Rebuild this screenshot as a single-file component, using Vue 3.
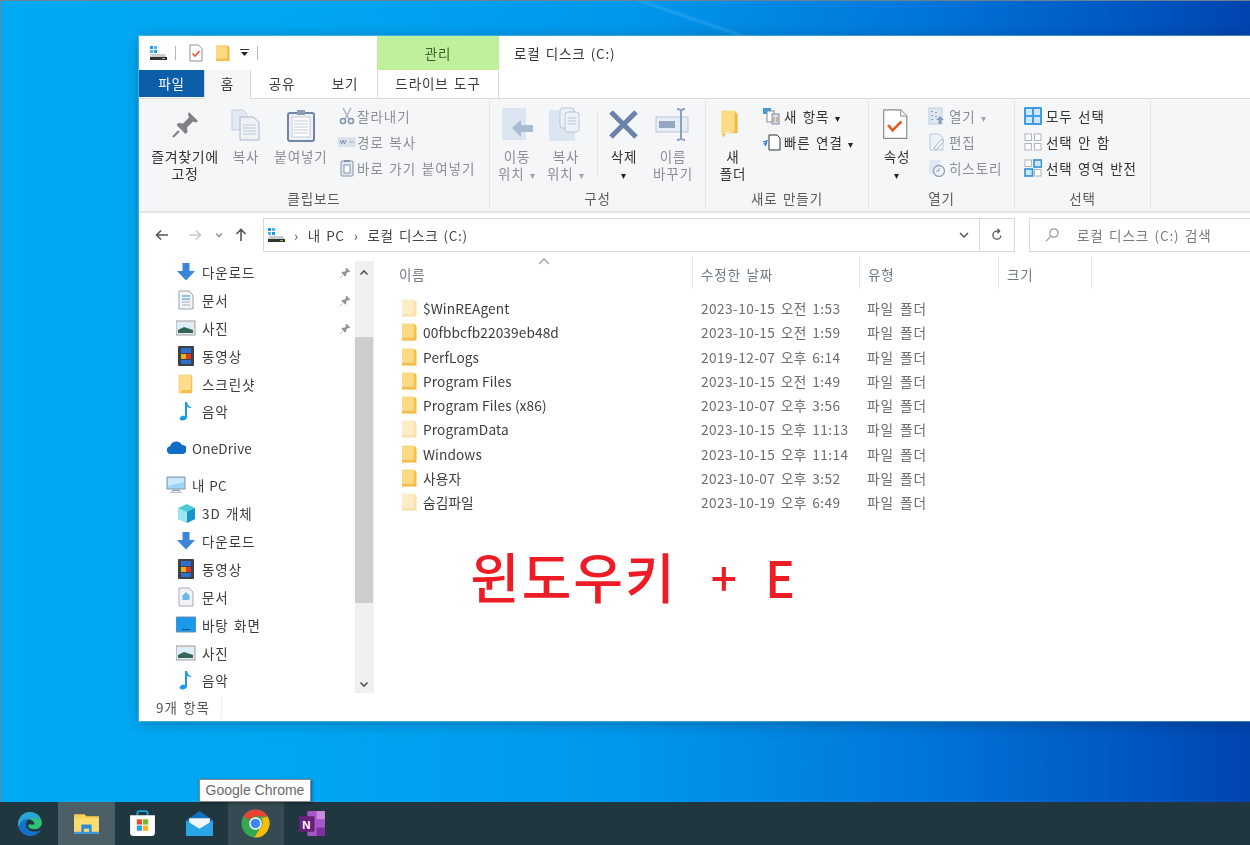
<template>
  <div class="desktop">
    <!-- explorer window -->
    <section class="win">
      <header class="titlebar">
        <div class="qat">
          <svg class="qi qdrive" viewBox="0 0 18 16" v-html="icons.drive" />
          <i class="qsep" />
          <svg class="qi qprops" viewBox="0 0 16 18" v-html="icons.props" />
          <svg class="qi qfold" viewBox="0 0 16 18" v-html="icons.folder" />
          <svg class="qdrop" viewBox="0 0 9 8"><path d="M0 .5h9" stroke="#333" /><path d="M1 3h7L4.500 7z" fill="#222" /></svg>
          <i class="qsep qsep2" />
        </div>
        <div class="manage">관리</div>
        <div class="wintitle">로컬 디스크 (C:)</div>
      </header>

      <nav class="tabs">
        <div class="tab tab-file">파일</div>
        <div class="tab tab-home">홈</div>
        <div class="tab tab-share">공유</div>
        <div class="tab tab-view">보기</div>
        <div class="tab tab-drive">드라이브 도구</div>
      </nav>

      <div class="ribbon">
        <!-- 클립보드 -->
        <div class="group" style="width:351px">
          <div class="group-body">
            <div class="big strong pinbtn" style="width:86px">
              <svg viewBox="0 0 32 32" v-html="icons.pin" />
              <span>즐겨찾기에<br />고정</span>
            </div>
            <div class="big dim" style="width:36px">
              <svg viewBox="0 0 32 32" v-html="icons.copy" />
              <span>복사</span>
            </div>
            <div class="big dim" style="width:74px">
              <svg viewBox="0 0 32 32" v-html="icons.paste" />
              <span>붙여넣기</span>
            </div>
            <div class="smalls clip">
              <div class="small dim"><svg viewBox="0 0 18 18" v-html="icons.cut" /><span>잘라내기</span></div>
              <div class="small dim"><svg viewBox="0 0 18 18" v-html="icons.path" /><span>경로 복사</span></div>
              <div class="small dim"><svg viewBox="0 0 18 18" v-html="icons.shortcut" /><span>바로 가기 붙여넣기</span></div>
            </div>
          </div>
          <div class="group-label">클립보드</div>
        </div>

        <!-- 구성 -->
        <div class="group" style="width:216px">
          <div class="group-body organize">
            <div class="big dim" style="width:50px">
              <svg viewBox="0 0 36 36" v-html="icons.move" />
              <span>이동<br />위치 <em>▾</em></span>
            </div>
            <div class="big dim" style="width:48px">
              <svg viewBox="0 0 36 36" v-html="icons.copyto" />
              <span>복사<br />위치 <em>▾</em></span>
            </div>
            <i class="vsep" />
            <div class="big strong" style="width:52px">
              <svg viewBox="0 0 36 36" v-html="icons.del" />
              <span>삭제<br /><em class="dark">▾</em></span>
            </div>
            <div class="big dim" style="width:46px">
              <svg viewBox="0 0 36 36" v-html="icons.rename" />
              <span>이름<br />바꾸기</span>
            </div>
          </div>
          <div class="group-label">구성</div>
        </div>

        <!-- 새로 만들기 -->
        <div class="group" style="width:163px">
          <div class="group-body newgrp">
            <div class="big strong" style="width:54px">
              <svg viewBox="0 0 36 36" v-html="icons.newfolder" />
              <span>새<br />폴더</span>
            </div>
            <div class="smalls two">
              <div class="small strong"><svg viewBox="0 0 18 18" v-html="icons.newitem" /><span>새 항목 <em class="dark">▾</em></span></div>
              <div class="small strong"><svg viewBox="0 0 18 18" v-html="icons.easy" /><span>빠른 연결 <em class="dark">▾</em></span></div>
            </div>
          </div>
          <div class="group-label">새로 만들기</div>
        </div>

        <!-- 열기 -->
        <div class="group" style="width:146px">
          <div class="group-body opengrp">
            <div class="big strong" style="width:52px">
              <svg viewBox="0 0 36 36" v-html="icons.propsBig" />
              <span>속성<br /><em class="dark">▾</em></span>
            </div>
            <div class="smalls">
              <div class="small dim"><svg viewBox="0 0 18 18" v-html="icons.open" /><span>열기 <em>▾</em></span></div>
              <div class="small dim"><svg viewBox="0 0 18 18" v-html="icons.edit" /><span>편집</span></div>
              <div class="small dim"><svg viewBox="0 0 18 18" v-html="icons.history" /><span>히스토리</span></div>
            </div>
          </div>
          <div class="group-label">열기</div>
        </div>

        <!-- 선택 -->
        <div class="group" style="width:136px">
          <div class="group-body selgrp">
            <div class="smalls">
              <div class="small strong"><svg viewBox="0 0 18 18" v-html="icons.selAll" /><span>모두 선택</span></div>
              <div class="small strong"><svg viewBox="0 0 18 18" v-html="icons.selNone" /><span>선택 안 함</span></div>
              <div class="small strong"><svg viewBox="0 0 18 18" v-html="icons.selInv" /><span>선택 영역 반전</span></div>
            </div>
          </div>
          <div class="group-label">선택</div>
        </div>
      </div>

      <!-- address row -->
      <div class="addr-row">
        <div class="navs">
          <svg viewBox="0 0 16 16" class="nav on"><path d="M14 8H2.500M7 3.500 2.500 8 7 12.500" /></svg>
          <svg viewBox="0 0 16 16" class="nav off"><path d="M2 8h11.500M9 3.500 13.500 8 9 12.500" /></svg>
          <svg viewBox="0 0 10 10" class="nav chev"><path d="M2 3.500 5 6.500 8 3.500" /></svg>
          <svg viewBox="0 0 16 16" class="nav on"><path d="M8 14V2.500M3.500 7 8 2.500 12.500 7" /></svg>
        </div>
        <div class="addr">
          <svg class="drive" viewBox="0 0 18 16" v-html="icons.drive" />
          <span class="crumb-sep">›</span><span>내 PC</span>
          <span class="crumb-sep">›</span><span>로컬 디스크 (C:)</span>
          <span class="addr-end">
            <svg viewBox="0 0 12 12" class="addr-chev"><path d="M2 4l4 4 4-4" /></svg>
            <i class="addr-div" />
            <svg viewBox="0 0 16 16" class="refresh"><path d="M12.500 8.500A4.600 4.600 0 1 1 8 3.500h2M8.500 1 11 3.500 8.500 6" /></svg>
          </span>
        </div>
        <div class="search">
          <svg viewBox="0 0 16 16"><circle cx="10" cy="6" r="4.200" /><path d="M7 9.200 2 14.200" /></svg>
          <span>로컬 디스크 (C:) 검색</span>
        </div>
      </div>

      <div class="content">
        <aside class="side">
          <div class="tree">
            <div
              v-for="item in tree"
              :key="item.key"
              class="node"
              :class="{ root: item.root, gap: item.gap }"
            >
              <svg viewBox="0 0 20 20" v-html="icons[item.icon]" />
              <span>{{ item.label }}</span>
              <svg v-if="item.pin" class="pinned" viewBox="0 0 12 12" v-html="icons.tinyPin" />
            </div>
          </div>
          <div class="scrollbar">
            <svg class="sb-arrow" viewBox="0 0 10 10"><path d="M1.500 6.500 5 3l3.500 3.500" /></svg>
            <div class="sb-thumb" />
            <svg class="sb-arrow sb-down" viewBox="0 0 10 10"><path d="M1.500 3.500 5 7l3.500-3.500" /></svg>
          </div>
        </aside>

        <main class="files">
          <div class="cols">
            <svg class="sort" viewBox="0 0 12 7"><path d="M1 6l5-5 5 5" /></svg>
            <div class="col" style="width:294px">이름</div>
            <div class="col" style="width:159px">수정한 날짜</div>
            <div class="col" style="width:131px">유형</div>
            <div class="col" style="width:85px">크기</div>
          </div>
          <div class="rows">
            <div v-for="f in files" :key="f.name" class="row" :class="{ hidden: f.hidden }">
              <div class="fname">
                <svg viewBox="0 0 16 18" v-html="icons.folder" />
                <span>{{ f.name }}</span>
              </div>
              <div class="fdate">{{ f.date }}</div>
              <div class="ftype">파일 폴더</div>
            </div>
          </div>
          <div class="note">윈도우키<b>+</b><b class="e">E</b></div>
        </main>
      </div>

      <footer class="status"><span>9개 항목</span></footer>
    </section>

    <!-- tooltip over the taskbar -->
    <div class="tooltip">Google Chrome</div>

    <div class="taskbar">
      <div class="tb"><svg viewBox="0 0 28 28" v-html="icons.edge" /></div>
      <div class="tb active"><svg viewBox="0 0 28 28" v-html="icons.explorer" /></div>
      <div class="tb"><svg viewBox="0 0 28 28" v-html="icons.store" /></div>
      <div class="tb"><svg viewBox="0 0 28 28" v-html="icons.mail" /></div>
      <div class="tb hover"><svg viewBox="0 0 28 28" v-html="icons.chrome" /></div>
      <div class="tb"><svg viewBox="0 0 28 28" v-html="icons.onenote" /></div>
    </div>
  </div>
</template>

<script setup>
const folder20 = '<path d="M3 1h13v18H3z" fill="#fcdd8e" stroke="#f0c766" stroke-width=".6"/><path d="M15 3v13H5v3h11V3z" fill="#f3c04f"/>'

const icons = {
  drive: '<rect x="1" y="1" width="3" height="3" fill="#1e9be8"/><rect x="5" y="1" width="3" height="3" fill="#4fb6f0"/><rect x="1" y="5" width="3" height="3" fill="#4fb6f0"/><rect x="5" y="5" width="3" height="3" fill="#1e9be8"/><path d="M2 9h14l1.500 3H1z" fill="#c9ced2"/><rect x="1" y="12" width="17" height="3" fill="#333"/><rect x="13" y="13" width="3" height="1" fill="#6fd04a"/>',
  props: '<path d="M2 1h8.500L14 4.500V17H2z" fill="#fff" stroke="#8f8f8f"/><path d="M4.500 9.500l2.500 2.500 4.500-5" fill="none" stroke="#e8582a" stroke-width="1.600"/>',
  folder: '<path d="M1 1h11l2.500 2v14H1z" fill="#fcd983"/><path d="M12 1v13.500H1V17h13.500V3z" fill="#f3c04f"/>',
  pin: '<path d="M20 3l9 9-2 1.500-3-1-6 6 .5 4.500-2 2-9-9 2-2 4.500.5 6-6-1-3z" fill="#808285"/><path d="M10 22l-6 6" stroke="#808285" stroke-width="2.200"/>',
  copy: '<path d="M2 1h11l4 4v16H2z" fill="#e3e9f2" stroke="#c5d0df"/><path d="M10 8h13l6 5v18H10z" fill="#eef2f7" stroke="#a9b8cc"/><path d="M13 16h13M13 19h13M13 22h13M13 25h13" stroke="#bcc8d8"/>',
  paste: '<rect x="3" y="4" width="26" height="28" rx="2" fill="#eef1f5" stroke="#6f86a8" stroke-width="2"/><rect x="7" y="8" width="18" height="20" fill="#fff" stroke="#c5cdd8"/><path d="M9 12h14M9 15h14M9 18h14M9 21h14M9 24h14" stroke="#c3ccd8"/><rect x="12" y="1" width="8" height="5" fill="#8c9db5"/>',
  cut: '<path d="M5 1l6 11M13 1 7 12" stroke="#a9b3bf" stroke-width="1.500" fill="none"/><circle cx="5" cy="14" r="2.500" fill="none" stroke="#7e93b2" stroke-width="1.500"/><circle cx="13" cy="14" r="2.500" fill="none" stroke="#7e93b2" stroke-width="1.500"/>',
  path: '<rect x="0" y="4" width="18" height="10" fill="#dbe3ef"/><path d="M2 7l1.500 4L5 7l1.500 4L8 7" stroke="#7e93b2" fill="none"/><path d="M11 9h5" stroke="#9fb0c7"/>',
  shortcut: '<rect x="3" y="2" width="12" height="15" rx="1" fill="#e3e8ef" stroke="#8496b0"/><rect x="6" y="6" width="6" height="8" fill="#fff" stroke="#7e93b2"/><rect x="6" y="1" width="6" height="2" fill="#8496b0"/>',
  move: '<rect x="3" y="1" width="24" height="32" fill="#dce6f2"/><path d="M13 21l9-8v5h12v7H22v5z" fill="#a9bcd3"/>',
  copyto: '<rect x="1" y="3" width="26" height="31" fill="#dce6f2"/><rect x="12" y="1" width="14" height="20" rx="3" fill="#eef2f7" stroke="#b7c5d8"/><rect x="17" y="5" width="14" height="20" rx="3" fill="#eef2f7" stroke="#b7c5d8"/><path d="M20 11h8M20 14h8M20 17h8" stroke="#b7c5d8"/>',
  del: '<path d="M5 5l25 25M30 5 5 30" stroke="#6a83a8" stroke-width="5"/>',
  rename: '<rect x="1" y="10" width="32" height="15" fill="#e8eef6" stroke="#b6c4d8"/><rect x="4" y="14" width="16" height="7" fill="#93a6c2"/><path d="M26 3v29M22 2c2 0 4 1 4 2 0-1 2-2 4-2M22 33c2 0 4-1 4-2 0 1 2 2 4 2" stroke="#8ba0bd" stroke-width="2" fill="none"/>',
  newfolder: '<path d="M5 2h15l3 3v21H5z" fill="#f9d672"/><path d="M20 2v24H10l-3 6-2-3V2z" fill="#fbdc85"/><path d="M20 4l3 2v21l-13 .5L7 32V28l13-2z" fill="#eeb93f"/>',
  newitem: '<rect x="0" y="1" width="8" height="6" fill="#3f9be0"/><rect x="4" y="4" width="7" height="11" fill="#fff" stroke="#888"/><rect x="9" y="7" width="7" height="10" fill="#d8dff0" stroke="#889"/><path d="M11 10v5M14 10v5" stroke="#b85" />',
  easy: '<path d="M6 2h8l3 3v12H6z" fill="#fff" stroke="#333"/><path d="M0 9l4-1-1 2-2 1h2l-1 2" fill="none" stroke="#1e73c8" stroke-width="1.200"/>',
  propsBig: '<path d="M3 1h19l7 7v25H3z" fill="#fff" stroke="#8a8a8a" stroke-width="1.300"/><path d="M22 1v7h7" fill="#eee" stroke="#8a8a8a"/><path d="M8 18l5 6 10-10" fill="none" stroke="#ea5a1e" stroke-width="3"/>',
  open: '<rect x="1" y="1" width="13" height="16" fill="#dfe7f2" stroke="#c1cedd"/><path d="M4 4v1M4 8v1M4 12v1M8 5v1M8 9v1" stroke="#6e86a8" stroke-width="1.500"/><path d="M12 9l4 4h-2.500v4h-3v-4H8z" fill="#8ba0bd"/>',
  edit: '<path d="M2 1h9l4 4v12H2z" fill="#edf2f8" stroke="#bccadb"/><path d="M6 15l8-9 2 2-8 9z" fill="#fff" stroke="#9db1ca"/>',
  history: '<rect x="1" y="1" width="11" height="14" fill="#dfe7f2"/><circle cx="11" cy="12" r="5.500" fill="#eef2f7" stroke="#8c9fb8" stroke-width="1.300"/><path d="M11 9v3H8" stroke="#8c9fb8" fill="none"/>',
  selAll: '<rect x="0" y="0" width="18" height="18" rx="1" fill="#3f9ce6"/><rect x="2" y="2" width="6" height="6" fill="#cfe7fa"/><rect x="10" y="2" width="6" height="6" fill="#cfe7fa"/><rect x="2" y="10" width="6" height="6" fill="#cfe7fa"/><rect x="10" y="10" width="6" height="6" fill="#cfe7fa"/>',
  selNone: '<g fill="#fff" stroke="#aeb4ba"><rect x="1" y="1" width="6.500" height="6.500"/><rect x="10.500" y="1" width="6.500" height="6.500"/><rect x="1" y="10.500" width="6.500" height="6.500"/><rect x="10.500" y="10.500" width="6.500" height="6.500"/></g>',
  selInv: '<g fill="#fff" stroke="#aeb4ba"><rect x="1" y="1" width="6.500" height="6.500"/><rect x="10.500" y="10.500" width="6.500" height="6.500"/></g><g fill="#cfe7fa" stroke="#2f8fe0" stroke-width="1.600"><rect x="10" y="1" width="7.500" height="7"/><rect x="1" y="10" width="7.500" height="7"/></g>',
  tinyPin: '<path d="M7.500 1 11 4.500l-1 .5-1.200-.3-2 2 .2 1.800-.8.800-3.500-3.500.8-.8 1.800.2 2-2L7 1.500zM3.500 8.500 1 11" fill="#8a9096" stroke="#8a9096" stroke-width=".6"/>',
  down: '<path d="M6.500 1h7v8h5.500L10 18.500 1 9h5.500z" fill="#3a85d8"/>',
  docs: '<path d="M3 1h10l4 4v14H3z" fill="#f2f4f6" stroke="#9aa3ab"/><path d="M6 6h8M6 9h8" stroke="#6fb0e8" stroke-width="1.500"/><path d="M6 12h8M6 15h8" stroke="#a8b0b8"/>',
  pics: '<rect x="0" y="3" width="19" height="14" fill="#e6e8ea" stroke="#9aa0a6"/><rect x="2" y="5" width="15" height="10" fill="#dbeefa"/><path d="M2 12l6-3 9 3v3H2z" fill="#33665a"/>',
  videos: '<rect x="2" y="0" width="16" height="20" rx="1" fill="#3d4348"/><rect x="5" y="2" width="10" height="5" fill="#2f6fd0"/><rect x="5" y="8" width="5" height="5" fill="#e8b21c"/><rect x="10" y="8" width="5" height="5" fill="#d83a26"/><rect x="5" y="14" width="10" height="4" fill="#2f6fd0"/>',
  shots: folder20,
  music: '<path d="M9 1h2c.5 3 2 4 5 6-2 0-4-.5-5-1.500V16c0 2-2 3.500-4.500 3.500S3 18 4 16.500 7 14.500 9 15z" fill="#1a9be8"/>',
  cloud: '<path d="M4 17a4 4 0 0 1 0-7.800A6.500 6.500 0 0 1 16 8a4.500 4.500 0 0 1 1 9z" fill="#0f6fc6" transform="translate(0,-1)"/>',
  pc: '<rect x="1" y="2" width="18" height="12" fill="#9fd4f5" stroke="#8a9aa6"/><path d="M2 3h16v4L2 11z" fill="#c8e8fb"/><rect x="6" y="14.500" width="8" height="1.500" fill="#9aa4ab"/><rect x="4" y="16.500" width="12" height="1.500" fill="#c0c6cb"/>',
  cube: '<path d="M2 5l9-4 8 4v11l-8 4-9-4z" fill="#4fcbd8"/><path d="M11 9l8-4v11l-8 4z" fill="#1595c9"/><path d="M2 5l9 4v11l-9-4z" fill="#9be6ee"/>',
  docs2: '<path d="M3 1h10l4 4v14H3z" fill="#f0f2f4" stroke="#a4adb5"/><path d="M10 5l3.500 3.500V13H6.500V8.500z" fill="#6fb6ea"/>',
  desk: '<rect x="0" y="2" width="20" height="15" rx="1" fill="#1a98ea" stroke="#6c8ea8"/><rect x="6" y="14" width="8" height="1" fill="#0b4f80"/>',
  edge: '<path d="M25 14c0-6-5-11-11.500-11C7 3 2 8.500 2 14.500c0 1 .2 2 .5 3C4 12 8 9.500 12 10c4 .5 6 3 6 5h-6c-1 4 3 4.500 7 4.500 2 0 5-1.500 6-5.500z" fill="#32c17a"/><path d="M2.500 17.500C4 23 9 26 14 26c4.500 0 8-2.500 10-5.500-3 1.500-9 2-12-.5-3-2.500-3-6 0-10C8 9.500 4 12 2.500 17.500z" fill="#1371c7"/><path d="M13.500 3C7 3 2 8.500 2 14.500c0 1 .2 2 .5 3C4 12 8 9.500 12 10c3-1 8-2 12 1C22 6 18 3 13.500 3z" fill="#2aa3d6"/>',
  explorer: '<path d="M2 5h10l2 2h12v17H2z" fill="#f7cf52"/><rect x="2" y="9" width="24" height="15" fill="#fbdc6e"/><rect x="9" y="15" width="10" height="9" fill="#2f8bd8"/><rect x="11.500" y="19" width="5" height="5" fill="#f7dd7e"/><rect x="2" y="22" width="24" height="2" fill="#3397e0"/>',
  store: '<path d="M9 6V4a2 2 0 0 1 2-2h6a2 2 0 0 1 2 2v2" fill="none" stroke="#19a0e0" stroke-width="1.800"/><path d="M2 6h24v17a3 3 0 0 1-3 3H5a3 3 0 0 1-3-3z" fill="#fdfdfd"/><rect x="8.500" y="10" width="5" height="5" fill="#ea4a2c"/><rect x="14.500" y="10" width="5" height="5" fill="#70b82a"/><rect x="8.500" y="16" width="5" height="5" fill="#1f9fe8"/><rect x="14.500" y="16" width="5" height="5" fill="#f5b60e"/>',
  mail: '<path d="M1 11 14 2l13 9v14H1z" fill="#0f72c4"/><path d="M4 9h20v5l-10 6-10-6z" fill="#f2f6fa"/><path d="M1 11l13 8 13-8v15H1z" fill="#2aa6e6"/>',
  chrome: '<circle cx="14" cy="14" r="13.500" fill="#34a853"/><path d="M14 .5a13.500 13.500 0 0 1 11.700 6.800H14a6.500 6.500 0 0 0-5.800 3.600L2.500 7A13.500 13.500 0 0 1 14 .5z" fill="#ea4335"/><path d="M25.700 7.300A13.500 13.500 0 0 1 13 27.500l5.700-9.500A6.500 6.500 0 0 0 19.700 9z" fill="#fbbc05"/><circle cx="14" cy="14" r="6" fill="#fff"/><circle cx="14" cy="14" r="4.700" fill="#4285f4"/>',
  onenote: '<rect x="9" y="2" width="17" height="24" rx="1" fill="#a557c8"/><rect x="18" y="2" width="8" height="8" fill="#c98ae0"/><rect x="18" y="10" width="8" height="8" fill="#a557c8"/><rect x="18" y="18" width="8" height="8" fill="#7e2f9f"/><rect x="1" y="7" width="15" height="15" rx="1" fill="#68217a"/><text x="4" y="19" font-size="11" font-weight="700" fill="#fff" font-family="Liberation Sans">N</text>'
}

const tree = [
  { key: 'a1', icon: 'down', label: '다운로드', pin: true },
  { key: 'a2', icon: 'docs', label: '문서', pin: true },
  { key: 'a3', icon: 'pics', label: '사진', pin: true },
  { key: 'a4', icon: 'videos', label: '동영상' },
  { key: 'a5', icon: 'shots', label: '스크린샷' },
  { key: 'a6', icon: 'music', label: '음악' },
  { key: 'od', icon: 'cloud', label: 'OneDrive', root: true, gap: true },
  { key: 'pc', icon: 'pc', label: '내 PC', root: true, gap: true },
  { key: 'b1', icon: 'cube', label: '3D 개체' },
  { key: 'b2', icon: 'down', label: '다운로드' },
  { key: 'b3', icon: 'videos', label: '동영상' },
  { key: 'b4', icon: 'docs2', label: '문서' },
  { key: 'b5', icon: 'desk', label: '바탕 화면' },
  { key: 'b6', icon: 'pics', label: '사진' },
  { key: 'b7', icon: 'music', label: '음악' }
]

const files = [
  { name: '$WinREAgent', date: '2023-10-15 오전 1:53', hidden: true },
  { name: '00fbbcfb22039eb48d', date: '2023-10-15 오전 1:59' },
  { name: 'PerfLogs', date: '2019-12-07 오후 6:14' },
  { name: 'Program Files', date: '2023-10-15 오전 1:49' },
  { name: 'Program Files (x86)', date: '2023-10-07 오후 3:56' },
  { name: 'ProgramData', date: '2023-10-15 오후 11:13', hidden: true },
  { name: 'Windows', date: '2023-10-15 오후 11:14' },
  { name: '사용자', date: '2023-10-07 오후 3:52' },
  { name: '숨김파일', date: '2023-10-19 오후 6:49', hidden: true }
]
</script>

<style>
html, body { margin: 0; background: #0aa0ea; }
</style>

<style scoped>
.desktop {
  position: relative;
  width: 1250px;
  height: 845px;
  overflow: hidden;
  font-family: "Noto Sans CJK KR", "Noto Sans", "Liberation Sans", sans-serif;
  font-size: 13.500px;
  letter-spacing: .9px;
  word-spacing: 1.500px;
  color: #3a3a3a;
  background:
    linear-gradient(18.900deg, transparent 83.300%, rgba(255,255,255,.12) 83.500%, transparent 83.800%),
    linear-gradient(90deg, #00aaf5 0%, #00a6f2 25%, #0098ec 50%, #0079dc 72%, #0058c4 90%, #0044ae 100%);
  box-shadow: inset 0 1px 0 #6d8290, inset 1px 0 0 #6d8290;
}

/* ── Window (free on the desktop) ─────────────────────────── */
.win {
  position: absolute;
  left: 139px;
  top: 36px;
  width: 1111px;
  height: 685px;
  background: #fff;
  display: flex;
  flex-direction: column;
  box-shadow: 0 0 0 1px rgba(120,200,240,.5), 0 2px 14px rgba(0,0,0,.28);
  filter: blur(.4px);
}

.titlebar {
  height: 34px;
  display: flex;
  flex-shrink: 0;
}
.qat {
  width: 238px;
  display: flex;
  align-items: center;
  padding-left: 10px;
  box-sizing: border-box;
}
.qi { flex-shrink: 0; }
.qdrive { width: 18px; height: 16px; margin-right: 8px; }
.qprops { width: 16px; height: 18px; margin-left: 12px; }
.qfold { width: 16px; height: 18px; margin-left: 11px; }
.qsep { width: 1px; height: 14px; background: #b5b5b5; }
.qsep2 { margin-left: 8px; }
.qdrop { width: 9px; height: 8px; margin-left: 9px; }
.manage {
  width: 122px;
  background: #bff09c;
  text-align: center;
  line-height: 34px;
  color: #3f5f30;
}
.wintitle {
  margin-left: 15px;
  line-height: 34px;
  color: #333;
  letter-spacing: .8px;
}

.tabs {
  height: 29px;
  display: flex;
  flex-shrink: 0;
  box-sizing: border-box;
  border-bottom: 1px solid #dadbdc;
}
.tab { line-height: 27px; text-align: center; }
.tab-file { width: 65px; height: 27px; background: #0c5ea9; color: #fff; }
.tab-home {
  width: 47px;
  height: 29px;
  background: #f5f6f7;
  border: 1px solid #dadbdc;
  border-bottom: 0;
  border-top: 0;
  box-sizing: border-box;
}
.tab-share { width: 62px; }
.tab-view { width: 64px; }
.tab-drive {
  width: 122px;
  border-left: 1px solid #dadbdc;
  border-right: 1px solid #dadbdc;
  box-sizing: border-box;
}

.ribbon {
  height: 114px;
  flex-shrink: 0;
  display: flex;
  box-sizing: border-box;
  background: #f5f6f7;
  border-bottom: 2px solid #e4e5e6;
}
.group {
  box-sizing: border-box;
  display: flex;
  flex-direction: column;
  border-right: 1px solid #e2e3e4;
  height: 107px;
  margin-top: 2px;
}
.group-body {
  flex: 1;
  display: flex;
  padding: 6px 0 0 3px;
  min-height: 0;
}
.group-label {
  height: 19px;
  line-height: 19px;
  text-align: center;
  color: #5a5a5a;
}
.big {
  display: flex;
  flex-direction: column;
  align-items: center;
  text-align: center;
  line-height: 17px;
  flex-shrink: 0;
}
.big svg { width: 32px; height: 36px; margin-bottom: 5px; }
.pinbtn { font-size: 14px; letter-spacing: .6px; }
.strong { color: #333; }
.dim { color: #8b8f93; }
em { font-style: normal; font-size: 10px; color: #a0a4a8; }
em.dark { color: #222; }

.smalls {
  display: flex;
  flex-direction: column;
  gap: 5px;
  margin-top: -2px;
}
.clip .small { gap: 1px; letter-spacing: 1px; }
.small {
  height: 21px;
  display: flex;
  align-items: center;
  gap: 3px;
  white-space: nowrap;
}
.small svg { width: 18px; height: 18px; flex-shrink: 0; }
.organize { padding-left: 2px; }
.organize .big svg { width: 36px; }
.vsep { width: 1px; height: 64px; margin: 4px 0 0 7px; background: #e2e3e4; }
.newgrp { padding-left: 0; }
.newgrp .smalls { margin-left: 3px; }
.opengrp { padding-left: 2px; }
.opengrp .smalls { margin-left: 5px; }
.selgrp { padding-left: 9px; }
.selgrp .small { gap: 4px; }

/* ── Address row ──────────────────────────────────────────── */
.addr-row {
  height: 44px;
  flex-shrink: 0;
  display: flex;
  align-items: center;
  box-sizing: border-box;
}
.navs {
  width: 124px;
  display: flex;
  align-items: center;
  padding-left: 15px;
  gap: 17px;
  box-sizing: border-box;
}
.nav { width: 16px; height: 16px; fill: none; stroke-width: 1.600; flex-shrink: 0; }
.nav.on { stroke: #555; }
.nav.off { stroke: #c8c8c8; }
.nav.chev { width: 10px; height: 10px; stroke: #9a9a9a; margin: 0 -8px 0 -6px; }
.addr {
  width: 752px;
  height: 34px;
  box-sizing: border-box;
  border: 1px solid #d9d9d9;
  display: flex;
  align-items: center;
  padding-left: 3px;
  gap: 7px;
  color: #444;
  letter-spacing: .7px;
}
.drive { width: 18px; height: 16px; flex-shrink: 0; }
.crumb-sep { color: #555; margin: 0 2px 0 2px; }
.addr-end {
  margin-left: auto;
  display: flex;
  align-items: center;
  height: 100%;
}
.addr-chev { width: 12px; height: 12px; fill: none; stroke: #555; stroke-width: 1.500; margin-right: 9px; }
.addr-div { width: 1px; height: 100%; background: #d9d9d9; }
.refresh { width: 14px; height: 14px; margin: 0 10px; fill: none; stroke: #555; stroke-width: 1.500; }
.search {
  margin-left: 14px;
  flex: 1;
  height: 34px;
  box-sizing: border-box;
  border: 1px solid #d9d9d9;
  border-right: 0;
  display: flex;
  align-items: center;
  padding-left: 14px;
  gap: 17px;
  color: #7a7a7a;
}
.search svg { width: 16px; height: 16px; fill: none; stroke: #999; stroke-width: 1.200; flex-shrink: 0; }

/* ── Content ──────────────────────────────────────────────── */
.content {
  flex: 1;
  display: flex;
  min-height: 0;
}
.side {
  width: 235px;
  flex-shrink: 0;
  display: flex;
  box-sizing: border-box;
  border-right: 1px solid #f0f0f0;
}
.tree {
  width: 217px;
  padding-top: 1px;
  box-sizing: border-box;
}
.node {
  height: 27.900px;
  display: flex;
  align-items: center;
  padding-left: 37px;
  gap: 6px;
  color: #3c3c3c;
  position: relative;
}
.node > svg:first-child { width: 20px; height: 20px; flex-shrink: 0; }
.node.root { padding-left: 27px; letter-spacing: .2px; }
.node.gap { margin-top: 9px; }
.pinned { position: absolute; right: 4px; top: 9px; width: 12px; height: 12px; }
.scrollbar {
  width: 18px;
  margin: 4px 0 2px;
  background: #f0f0f0;
  display: flex;
  flex-direction: column;
  align-items: center;
}
.sb-arrow {
  width: 10px;
  height: 10px;
  fill: none;
  stroke: #555;
  stroke-width: 1.600;
  margin: 7px 0 59px;
  flex-shrink: 0;
}
.sb-thumb { width: 100%; height: 266px; background: #cdcdcd; }
.sb-down { margin: auto 0 4px; }

.files {
  flex: 1;
  position: relative;
  padding-left: 25px;
  min-width: 0;
}
.cols {
  height: 32px;
  display: flex;
  position: relative;
}
.sort {
  position: absolute;
  left: 139px;
  top: 1px;
  width: 12px;
  height: 7px;
  fill: none;
  stroke: #a0a0a0;
  stroke-width: 1.300;
}
.col {
  box-sizing: border-box;
  color: #6f7a85;
  line-height: 34px;
  border-right: 1px solid #e5e5e5;
  margin-right: 8px;
  height: 32px;
  flex-shrink: 0;
}
.rows { padding-top: 7px; }
.row {
  height: 24.250px;
  display: flex;
  align-items: center;
  color: #3c3c3c;
}
.fname {
  width: 302px;
  display: flex;
  align-items: center;
  gap: 5px;
  padding-left: 2px;
  box-sizing: border-box;
  font-size: 13.700px;
  letter-spacing: .1px;
  word-spacing: 0;
}
.fname svg { width: 17px; height: 20px; flex-shrink: 0; }
.fdate { width: 166px; color: #6d6d6d; font-size: 13.700px; letter-spacing: .4px; word-spacing: 2px; }
.ftype { color: #6d6d6d; font-size: 13.700px; letter-spacing: .9px; word-spacing: 2px; }
.hidden .fname svg { opacity: .45; }

.note {
  position: absolute;
  left: 96px;
  top: 284px;
  color: #ee1c25;
  font-size: 54px;
  letter-spacing: 2px;
  word-spacing: 0;
  line-height: 70px;
  font-weight: 500;
  white-space: nowrap;
  display: flex;
}
.note b { font-weight: 500; font-size: 46px; margin-left: 34px; }
.note b.e { margin-left: 26px; font-size: 50px; }

.status {
  height: 26px;
  flex-shrink: 0;
  display: flex;
  align-items: center;
  padding: 0 0 3px 17px;
  box-sizing: border-box;
  color: #555;
}
.status span { padding-right: 11px; border-right: 1px solid #eee; line-height: 20px; }

/* ── Taskbar ──────────────────────────────────────────────── */
.tooltip {
  position: absolute;
  left: 199px;
  top: 779px;
  width: 112px;
  height: 23px;
  box-sizing: border-box;
  background: #fff;
  border: 1px solid #8a8a8a;
  box-shadow: 1px 1px 3px rgba(0,0,0,.4);
  color: #6a6a6a;
  font-family: "Liberation Sans", sans-serif;
  font-size: 14px;
  letter-spacing: 0;
  word-spacing: 0;
  line-height: 21px;
  text-align: center;
  z-index: 2;
}
.taskbar {
  position: absolute;
  left: 0;
  right: 0;
  bottom: 0;
  height: 43px;
  background: #213740;
  display: flex;
  padding-left: 2px;
}
.tb {
  width: 56.400px;
  height: 43px;
  display: flex;
  align-items: center;
  justify-content: center;
}
.tb svg { width: 29px; height: 29px; }
.tb.active { background: #4c5e66; }
.tb.hover { background: #374a52; }
</style>
